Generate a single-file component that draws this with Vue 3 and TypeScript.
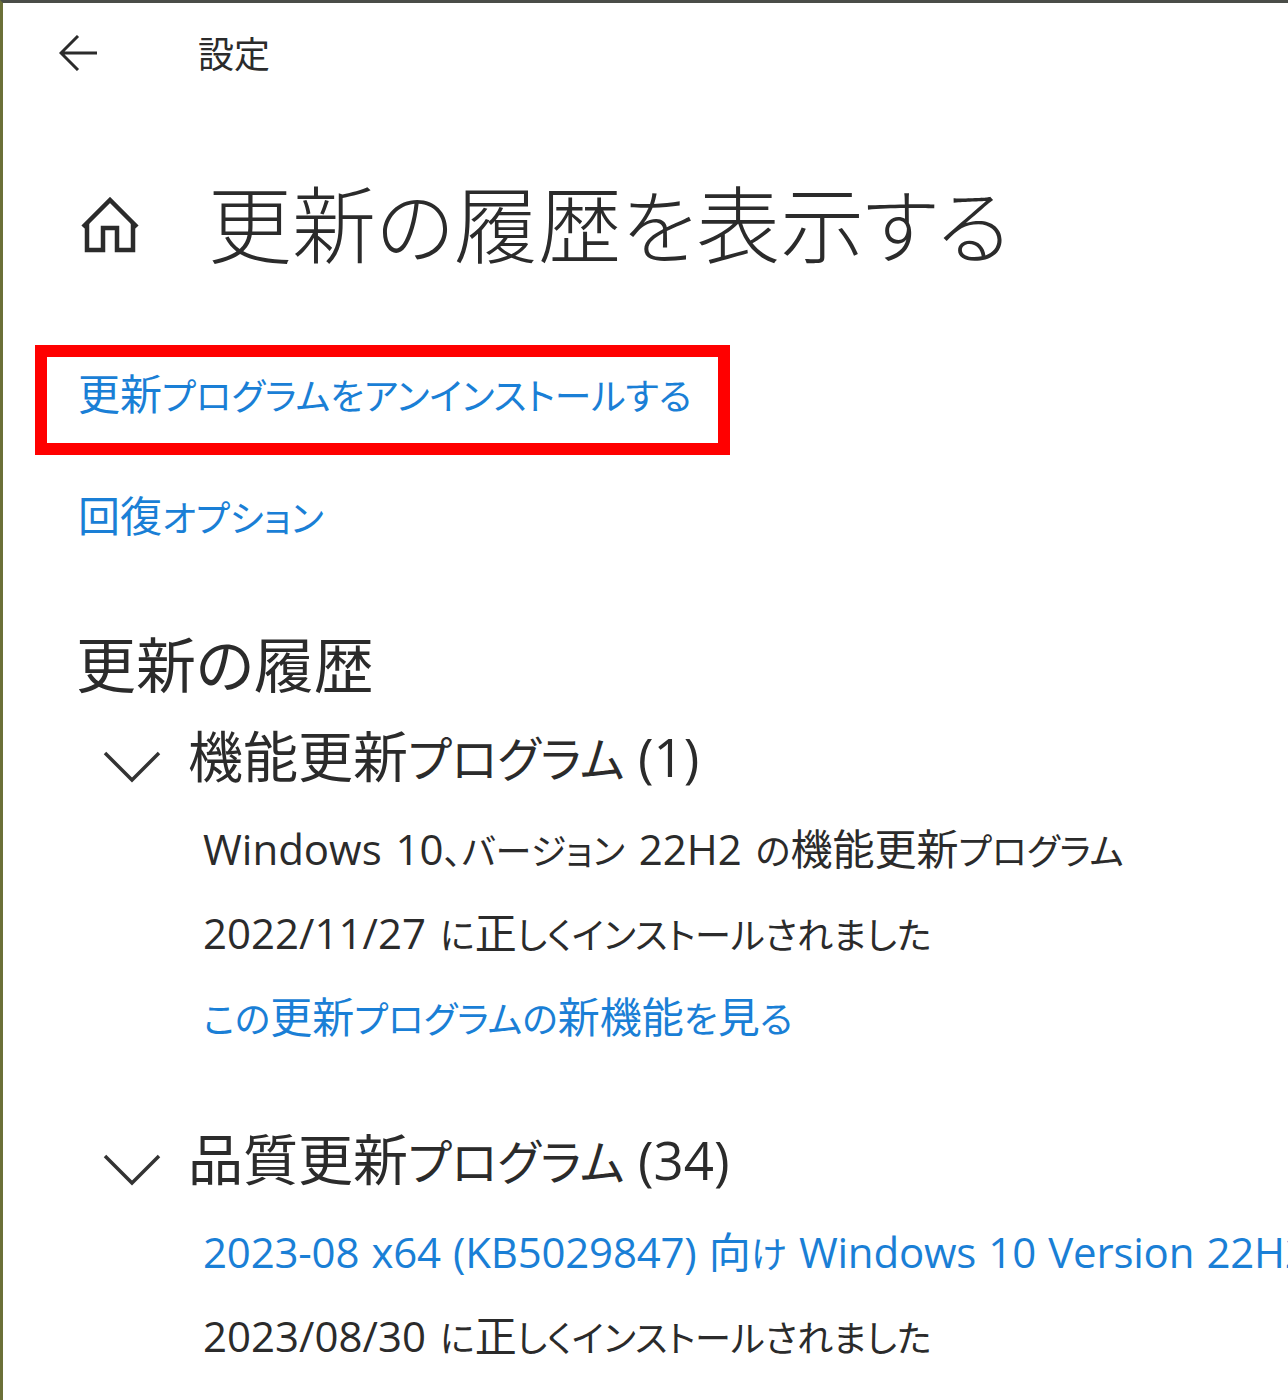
<script setup lang="ts">
interface Line { text: string; link?: boolean }
interface Block { title: string; lines: Line[] }
interface Run { text: string; cls: string }

const blocks: Block[] = [
  { title: '機能更新プログラム (1)', lines: [
    { text: 'Windows 10、バージョン 22H2 の機能更新プログラム' },
    { text: '2022/11/27 に正しくインストールされました' },
    { text: 'この更新プログラムの新機能を見る', link: true },
  ] },
  { title: '品質更新プログラム (34)', lines: [
    { text: '2023-08 x64 (KB5029847) 向け Windows 10 Version 22H2', link: true },
    { text: '2023/08/30 に正しくインストールされました' },
  ] },
]

// Yu Gothic UI sets kana visibly smaller than kanji, so each script gets its own run.
function runs(text: string): Run[] {
  const parts = text.match(/[\u3000-\u30ff]+|[\u4e00-\u9fff]+|[^\u3000-\u30ff\u4e00-\u9fff]+/g) ?? []
  return parts.map((p) => ({
    text: p,
    cls: /[\u3000-\u30ff]/.test(p) ? 'kana' : /[\u4e00-\u9fff]/.test(p) ? 'kanji' : 'latin',
  }))
}
</script>

<template>
  <div class="window">
    <header class="topbar">
      <svg class="back" viewBox="0 0 38 36" width="38" height="36" fill="none" stroke="#2b2b2b" stroke-width="3">
        <path d="M38 18H2M19 1 2 18l17 17" />
      </svg>
      <span class="crumb">設定</span>
    </header>
    <div class="heading">
      <svg class="home" viewBox="0 0 58 56" width="58" height="56" fill="none" stroke="#2b2b2b" stroke-width="4.5">
        <path d="M2 30 29 3l27 27" />
        <path d="M6 26v27h16V31h14v22h16V26" />
      </svg>
      <h1><span v-for="r in runs('更新の履歴を表示する')" :key="r.text" :class="r.cls">{{ r.text }}</span></h1>
    </div>
    <div class="boxed">
      <a class="link"><span v-for="r in runs('更新プログラムをアンインストールする')" :key="r.text" :class="r.cls">{{ r.text }}</span></a>
    </div>
    <a class="link recover"><span v-for="r in runs('回復オプション')" :key="r.text" :class="r.cls">{{ r.text }}</span></a>
    <h2><span v-for="r in runs('更新の履歴')" :key="r.text" :class="r.cls">{{ r.text }}</span></h2>
    <section v-for="b in blocks" :key="b.title" class="block">
      <div class="block-head">
        <svg class="chev" viewBox="0 0 58 34" width="58" height="34" fill="none" stroke="#333" stroke-width="3.5">
          <path d="M2 4 29 31 56 4" />
        </svg>
        <span class="block-title"><span v-for="r in runs(b.title)" :key="r.text" :class="r.cls">{{ r.text }}</span></span>
      </div>
      <p v-for="l in b.lines" :key="l.text" class="row" :class="{ 'link-row': l.link }"><span v-for="r in runs(l.text)" :key="r.text" :class="r.cls">{{ r.text }}</span></p>
    </section>
  </div>
</template>

<style scoped>
.window {
  position: relative;
  box-sizing: border-box;
  width: 1288px;
  height: 1400px;
  overflow: hidden;
  background: #fff;
  border-top: 3px solid #4a4d48;
  border-left: 3px solid #6b7038;
  font-family: "Open Sans", "Noto Sans CJK JP", sans-serif;
  font-feature-settings: "palt";
  color: #2b2b2b;
  padding-left: 32px;
}
.window::before {
  content: "";
  position: absolute;
  left: -3px;
  top: -3px;
  width: 127px;
  height: 3px;
  background: #6b7038;
}
.kana { font-size: 0.86em; }
.topbar { display: flex; align-items: center; height: 100px; padding-left: 24px; }
.back { flex: none; }
.crumb { margin-left: 101px; font-size: 36px; line-height: 40px; margin-top: 4px; }
.heading { display: flex; align-items: center; height: 120px; margin-top: 62px; padding-left: 46px; }
.home { flex: none; }
h1 { margin: 0 0 0 69px; font-size: 84px; line-height: 100px; height: 100px; font-weight: 300; white-space: nowrap; }
h1 .kana { font-size: 0.96em; }
.boxed {
  box-sizing: border-box;
  width: 695px;
  height: 110px;
  margin-top: 60px;
  border: 12px solid #f00;
  display: flex;
  align-items: center;
  padding: 0 0 12px 31px;
}
.link { color: #1a7fd6; font-size: 42px; line-height: 60px; height: 60px; white-space: nowrap; display: block; }
.link .kana { font-size: 0.875em; }
.recover { margin: 31px 0 0 43px; }
h2 { margin: 79px 0 0 41px; font-size: 60px; line-height: 80px; height: 80px; font-weight: 400; white-space: nowrap; }
h2 .kana { font-size: 1em; }
.block { margin-left: 68px; }
.block-head { display: flex; align-items: center; height: 102px; }
.chev { flex: none; margin-top: 20px; }
.block-title { margin-left: 27px; font-size: 55px; line-height: 70px; height: 70px; white-space: nowrap; }
.block-title .latin { font-size: 0.96em; }
.row { margin: 0 0 0 100px; font-size: 42px; line-height: 84px; height: 84px; white-space: nowrap; word-spacing: 3px; }
.link-row { color: #1a7fd6; word-spacing: 1.5px; }
.link-row .kana { font-size: 0.875em; }
.link-row .latin { letter-spacing: -0.2px; }
.block + .block { margin-top: 49px; }
</style>
